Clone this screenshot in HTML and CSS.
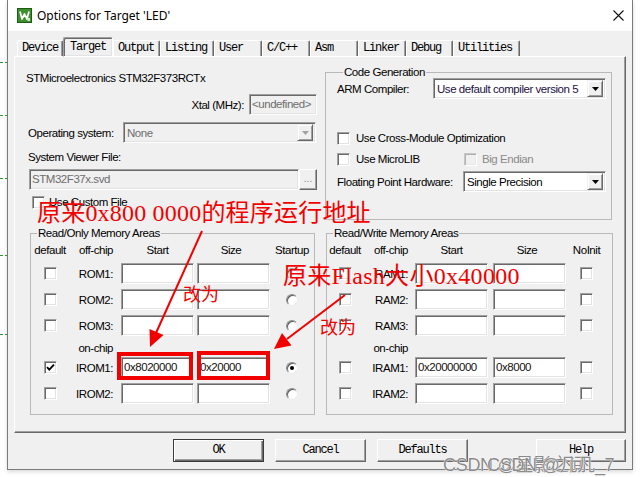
FILE: index.html
```html
<!DOCTYPE html>
<html>
<head>
<meta charset="utf-8">
<title>Options for Target 'LED'</title>
<link rel="stylesheet" href="styles.css">
</head>
<body>
<div class="strip"></div>
<div class="window">
  <div class="titlebar">
    <svg class="appicon" width="15" height="15" viewBox="0 0 15 15">
      <rect x="0.5" y="0.5" width="14" height="14" fill="#3d8f2e" stroke="#1e5a17"/>
      <polyline points="3,3.5 5,11 7.5,6 10,11 12,3.5" fill="none" stroke="#fff" stroke-width="1.7" stroke-linejoin="round"/>
      <rect x="10.5" y="10" width="2.5" height="3" fill="#cfe8c6"/>
    </svg>
    <span class="title">Options for Target 'LED'</span>
    <svg class="close" width="11" height="11" viewBox="0 0 11 11">
      <path d="M0.5 0.5 L10.5 10.5 M10.5 0.5 L0.5 10.5" stroke="#111" stroke-width="1.1" fill="none"/>
    </svg>
  </div>
  <div class="client">
    <div class="tabs">
      <div class="tab">Device</div>
      <div class="tab sel">Target</div>
      <div class="tab">Output</div>
      <div class="tab">Listing</div>
      <div class="tab">User</div>
      <div class="tab">C/C++</div>
      <div class="tab">Asm</div>
      <div class="tab">Linker</div>
      <div class="tab">Debug</div>
      <div class="tab">Utilities</div>
    </div>
    <div class="panel">
      <div class="col-left">
        <div class="dev">STMicroelectronics STM32F373RCTx</div>
        <div class="xtal"><span>Xtal (MHz):</span><div class="edit dis w67">&lt;undefined&gt;</div></div>
        <div class="os"><span>Operating system:</span>
          <div class="sel dis w193"><span class="val">None</span><span class="drop"><svg width="7" height="4" viewBox="0 0 7 4"><path d="M0 0h7L3.5 4z" fill="#a0a0a0"/></svg></span></div>
        </div>
        <div class="svf-label">System Viewer File:</div>
        <div class="svf"><div class="edit dis w270">STM32F37x.svd</div><div class="dots">...</div></div>
        <div class="custom"><span class="cb"></span><span>Use Custom File</span></div>
        <fieldset class="grp rom">
          <legend>Read/Only Memory Areas</legend>
          <div class="mgrid romg">
            <div class="hd ce">default</div><div class="hd lab">off-chip</div><div class="hd hs">Start</div><div class="hd hz">Size</div><div class="hd ce">Startup</div>
            <div class="ce"><span class="cb"></span></div><div class="lab">ROM1:</div><div><div class="edit w73"></div></div><div><div class="edit w73"></div></div><div class="ce"><span class="rb"></span></div>
            <div class="ce"><span class="cb"></span></div><div class="lab">ROM2:</div><div><div class="edit w73"></div></div><div><div class="edit w73"></div></div><div class="ce"><span class="rb"></span></div>
            <div class="ce"><span class="cb"></span></div><div class="lab">ROM3:</div><div><div class="edit w73"></div></div><div><div class="edit w73"></div></div><div class="ce"><span class="rb"></span></div>
            <div></div><div class="lab onchip">on-chip</div><div></div><div></div><div></div>
            <div class="ce"><span class="cb on"><svg width="9" height="9" viewBox="0 0 9 9"><path d="M1 4.2 L3.3 6.6 L8 1.6" fill="none" stroke="#000" stroke-width="1.8"/></svg></span></div><div class="lab">IROM1:</div><div><div class="edit w73">0x8020000</div></div><div><div class="edit w73">0x20000</div></div><div class="ce"><span class="rb on"></span></div>
            <div class="ce"><span class="cb"></span></div><div class="lab">IROM2:</div><div><div class="edit w73"></div></div><div><div class="edit w73"></div></div><div class="ce"><span class="rb"></span></div>
          </div>
        </fieldset>
      </div>
      <div class="col-right">
        <fieldset class="grp cg">
          <legend>Code Generation</legend>
          <div class="cg-row cg-comp"><span>ARM Compiler:</span>
            <div class="sel w173"><span class="val dark">Use default compiler version 5</span><span class="drop"><svg width="7" height="4" viewBox="0 0 7 4"><path d="M0 0h7L3.5 4z" fill="#000"/></svg></span></div>
          </div>
          <div class="cg-row cg-cmo"><span class="cb"></span><span class="cbl">Use Cross-Module Optimization</span></div>
          <div class="cg-row cg-ml">
            <span class="pair p1"><span class="cb"></span><span class="cbl">Use MicroLIB</span></span>
            <span class="pair dis"><span class="cb dis"></span><span class="cbl2">Big Endian</span></span>
          </div>
          <div class="cg-row cg-fph"><span>Floating Point Hardware:</span>
            <div class="sel w143"><span class="val">Single Precision</span><span class="drop"><svg width="7" height="4" viewBox="0 0 7 4"><path d="M0 0h7L3.5 4z" fill="#000"/></svg></span></div>
          </div>
        </fieldset>
        <fieldset class="grp rw">
          <legend>Read/Write Memory Areas</legend>
          <div class="mgrid rwg">
            <div class="hd ce">default</div><div class="hd lab">off-chip</div><div class="hd hs">Start</div><div class="hd hz">Size</div><div class="hd ce">NoInit</div>
            <div class="ce"><span class="cb"></span></div><div class="lab">RAM1:</div><div><div class="edit w73"></div></div><div><div class="edit w73"></div></div><div class="ce"><span class="cb"></span></div>
            <div class="ce"><span class="cb"></span></div><div class="lab">RAM2:</div><div><div class="edit w73"></div></div><div><div class="edit w73"></div></div><div class="ce"><span class="cb"></span></div>
            <div class="ce"><span class="cb"></span></div><div class="lab">RAM3:</div><div><div class="edit w73"></div></div><div><div class="edit w73"></div></div><div class="ce"><span class="cb"></span></div>
            <div></div><div class="lab onchip">on-chip</div><div></div><div></div><div></div>
            <div class="ce"><span class="cb"></span></div><div class="lab">IRAM1:</div><div><div class="edit w73">0x20000000</div></div><div><div class="edit w73">0x8000</div></div><div class="ce"><span class="cb"></span></div>
            <div class="ce"><span class="cb"></span></div><div class="lab">IRAM2:</div><div><div class="edit w73"></div></div><div><div class="edit w73"></div></div><div class="ce"><span class="cb"></span></div>
          </div>
        </fieldset>
      </div>
    </div>
    <div class="buttons">
      <div class="btn def">OK</div>
      <div class="btn">Cancel</div>
      <div class="btn">Defaults</div>
      <div class="btn help">Help</div>
    </div>
  </div>
</div>

<svg class="marks" width="640" height="477" viewBox="0 0 640 477">
  <g fill="none" stroke="#f20000" stroke-width="4">
    <rect x="119" y="354" width="72" height="24"/>
    <rect x="199" y="353" width="69" height="25"/>
  </g>
  <g stroke="#f20000" stroke-width="2" fill="#f20000">
    <line x1="202" y1="231" x2="156" y2="333"/>
    <polygon points="150,347 163.5,335 149.5,329" stroke="none"/>
    <line x1="345" y1="295" x2="287" y2="339"/>
    <polygon points="274,349 291.5,345.5 282,333" stroke="none"/>
  </g>
</svg>
<div class="note n1">原来0x800 0000的程序运行地址</div>
<div class="note n2">原来Flash大小0x40000</div>
<div class="note n3">改为</div>
<div class="note n4">改为</div>
<div class="wm"><span class="wa">CSDN @星影之间</span><span class="wb">CSDN @凡凡_7</span></div>
</body>
</html>
```

FILE: styles.css
```css
* { box-sizing: border-box; }
html, body { margin: 0; padding: 0; }
body {
  width: 640px;
  height: 477px;
  overflow: hidden;
  position: relative;
  background: #fff;
  display: flex;
  align-items: flex-start;
  font-family: "Liberation Sans", Arial, sans-serif;
  font-size: 11.5px;
  letter-spacing: -0.45px;
  color: #000;
}

/* background strip on the left with green dashed lines */
.strip {
  width: 7px;
  height: 477px;
  flex: none;
  background-image:
    repeating-linear-gradient(90deg, #2f9a2f 0 3px, transparent 3px 5px),
    repeating-linear-gradient(90deg, #2f9a2f 0 3px, transparent 3px 5px),
    repeating-linear-gradient(90deg, #2f9a2f 0 3px, transparent 3px 5px),
    repeating-linear-gradient(90deg, #2f9a2f 0 3px, transparent 3px 5px),
    repeating-linear-gradient(90deg, #2f9a2f 0 3px, transparent 3px 5px);
  background-size: 7px 1px;
  background-repeat: no-repeat;
  background-position: 0 62px, 0 115px, 0 178px, 0 255px, 0 334px;
}

.window {
  width: 626px;
  height: 470px;
  flex: none;
  border: 1px solid #7a7a7a;
  border-top: 0;
  background: #f0f0f0;
  display: flex;
  flex-direction: column;
  box-shadow: 0 2px 4px rgba(0,0,0,0.14);
}

.titlebar {
  height: 31px;
  flex: none;
  background: #fff;
  display: flex;
  align-items: center;
  padding-left: 9px;
}
.appicon { flex: none; margin-right: 5px; }
.title {
  font-family: "Noto Sans", "Open Sans", sans-serif;
  font-size: 12px;
  letter-spacing: 0;
  color: #000;
}
.close { margin-left: auto; margin-right: 8px; }

.client {
  flex: 1;
  padding: 6px 6px 0 6px;
  display: flex;
  flex-direction: column;
}

/* tabs */
.tabs {
  display: grid;
  grid-template-columns: 46px 50px 47px 54px 48px 48px 48px 48px 47px 67px;
  height: 19px;
  margin-left: 3px;
  flex: none;
  position: relative;
  z-index: 1;
}
.tab {
  margin-top: 3px;
  height: 16px;
  border-left: 1px solid #fff;
  border-top: 1px solid #fff;
  border-right: 1px solid #696969;
  border-radius: 2px 2px 0 0;
  box-shadow: inset -1px 0 0 #a0a0a0;
  padding-left: 4px;
  font-family: "Liberation Mono", "Courier New", monospace;
  font-size: 12px;
  letter-spacing: -1.2px;
  line-height: 15px;
  white-space: nowrap;
}
.tab.sel {
  margin-top: 0;
  height: 20px;
  padding-left: 6px;
  line-height: 17px;
  background: #f0f0f0;
  position: relative;
  z-index: 2;
}

/* tab panel */
.panel {
  height: 377px;
  flex: none;
  border: 1px solid;
  border-color: #fff #696969 #696969 #fff;
  box-shadow: inset -1px -1px 0 #a0a0a0;
  display: grid;
  grid-template-columns: 305px 1fr;
  align-items: start;
}

.col-left { display: flex; flex-direction: column; }
.col-right { display: flex; flex-direction: column; }

.dev { margin: 11px 0 0 11px; line-height: 20px; height: 20px; }
.xtal {
  margin-top: 6px;
  display: flex;
  justify-content: flex-end;
  align-items: center;
  gap: 5px;
  padding-right: 3px;
}
.os {
  margin-top: 7px;
  display: flex;
  align-items: center;
  padding-left: 13px;
  padding-right: 4px;
}
.os .sel { margin-left: auto; }
.svf-label { margin-top: 6px; line-height: 16px; padding-left: 13px; }
.svf { margin-top: 4px; display: flex; padding-left: 14px; }
.dots {
  width: 18px;
  height: 21px;
  border: 1px solid;
  border-color: #fff #696969 #696969 #fff;
  box-shadow: inset -1px -1px 0 #a0a0a0;
  color: #8a8a8a;
  text-align: center;
  line-height: 17px;
  font-size: 10px;
  letter-spacing: 0;
}
.custom {
  margin-top: 6px;
  height: 13px;
  display: flex;
  align-items: center;
  gap: 4px;
  padding-left: 17px;
  line-height: 13px;
}

/* controls */
.edit {
  height: 21px;
  background: #fff;
  border: 1px solid;
  border-color: #a0a0a0 #fff #fff #a0a0a0;
  box-shadow: inset 1px 1px 0 #696969, inset -1px -1px 0 #e3e3e3;
  padding-left: 2px;
  line-height: 19px;
  white-space: nowrap;
  overflow: hidden;
  color: #111;
}
.edit.dis { background: #f0f0f0; color: #6d6d6d; }
.w67 { width: 68px; }
.w73 { width: 73px; }
.w270 { width: 270px; }
.w193 { width: 193px; }
.w173 { width: 173px; }
.w143 { width: 143px; }

.sel {
  height: 21px;
  display: flex;
  align-items: center;
  background: #fff;
  border: 1px solid;
  border-color: #a0a0a0 #fff #fff #a0a0a0;
  box-shadow: inset 1px 1px 0 #696969, inset -1px -1px 0 #e3e3e3;
  padding: 0 2px 0 3px;
  white-space: nowrap;
}
.sel .val { flex: 1; overflow: hidden; }
.sel .val.dark { color: #1c1044; }
.sel.dis { background: #f0f0f0; color: #6d6d6d; }
.drop {
  width: 16px;
  height: 17px;
  flex: none;
  background: #f0f0f0;
  border: 1px solid;
  border-color: #f0f0f0 #696969 #696969 #f0f0f0;
  box-shadow: inset 1px 1px 0 #fff, inset -1px -1px 0 #a0a0a0;
  display: flex;
  align-items: center;
  justify-content: center;
}

.cb {
  width: 13px;
  height: 13px;
  flex: none;
  display: inline-flex;
  align-items: center;
  justify-content: center;
  background: #fff;
  border: 1px solid;
  border-color: #a0a0a0 #fff #fff #a0a0a0;
  box-shadow: inset 1px 1px 0 #696969, inset -1px -1px 0 #e3e3e3;
}
.cb.dis {
  background: #f0f0f0;
  border-color: #c8c8c8 #fff #fff #c8c8c8;
  box-shadow: inset 1px 1px 0 #b0b0b0, inset -1px -1px 0 #e8e8e8;
}
.rb {
  width: 12px;
  height: 12px;
  display: inline-block;
  position: relative;
  border-radius: 50%;
  background: #fff;
  border: 1px solid;
  border-color: #8c8c8c #ececec #ececec #8c8c8c;
  box-shadow: inset 1px 1px 0 #5a5a5a;
}
.rb.on::after {
  content: "";
  position: absolute;
  left: 3px;
  top: 3px;
  width: 4px;
  height: 4px;
  border-radius: 50%;
  background: #000;
}

/* group boxes */
.grp {
  margin: 0;
  padding: 0;
  min-width: 0;
  border: 1px solid #b9b9b9;
}
.grp legend {
  padding: 0 1px;
  margin-left: 6px;
  line-height: 14px;
}
.rom { margin: 17px 0 0 15px; width: 285px; padding: 2px 0 10px 0; }
.cg { margin: 8px 0 0 5px; width: 287px; padding: 0 5px 27px 11px; }
.rw { margin: 6px 0 0 6px; width: 287px; padding: 2px 0 10px 0; }

.mgrid {
  display: grid;
  grid-template-rows: 16px 21px 21px 21px 11px 21px 21px;
  row-gap: 5px;
  align-items: center;
}
.romg { grid-template-columns: 38px 52px 76px 73px 44px; }
.rwg { grid-template-columns: 36px 52px 78px 73px 41px; }
.romg .lab { padding-right: 8px; }
.rwg .lab { padding-right: 7px; }
.hd { line-height: 16px; white-space: nowrap; }
.ce { display: flex; justify-content: center; align-items: center; }
.lab { text-align: right; white-space: nowrap; }
.hs { width: 73px; text-align: center; }
.hz { width: 73px; text-align: center; padding-right: 5px; }
.onchip { align-self: end; line-height: 14px; margin-bottom: -3px; }

.cg-row { display: flex; align-items: center; }
.cg-comp { margin-top: -1px; height: 21px; }
.cg-comp .sel, .cg-fph .sel { margin-left: auto; }
.cg-cmo { margin-top: 29px; height: 20px; }
.cg-ml { margin-top: 1px; height: 20px; }
.cg-fph { margin-top: 2px; height: 21px; }
.cbl { margin-left: 6px; }
.cbl2 { margin-left: 5px; }
.pair { display: flex; align-items: center; }
.p1 { width: 127px; }
.pair.dis { color: #8a8a8a; }

/* buttons */
.buttons {
  margin-top: 6px;
  display: flex;
  gap: 11px;
  padding-left: 159px;
}
.btn {
  width: 91px;
  height: 23px;
  border: 1px solid;
  border-color: #fff #696969 #696969 #fff;
  box-shadow: inset -1px -1px 0 #a0a0a0;
  text-align: center;
  line-height: 20px;
  font-family: "Liberation Mono", "Courier New", monospace;
  font-size: 12px;
  letter-spacing: -1.2px;
}
.btn.def {
  border: 1px solid #3c3c3c;
  box-shadow: inset 1px 1px 0 #fff, inset -1px -1px 0 #696969, inset -2px -2px 0 #a0a0a0;
}
.btn.help { margin-left: auto; width: 90px; }

/* annotations drawn on top of the screenshot */
.marks { position: absolute; left: 0; top: 0; pointer-events: none; }
.note {
  position: absolute;
  color: #f20000;
  font-family: "Liberation Serif", "Noto Sans CJK SC", serif;
  white-space: nowrap;
  letter-spacing: 0;
}
.n1 { left: 37px; top: 199px; font-size: 24px; line-height: 28px; letter-spacing: 0.2px; }
.n2 { left: 283px; top: 262px; font-size: 24px; line-height: 28px; letter-spacing: 0.3px; }
.n3 { left: 183px; top: 285px; font-size: 18px; line-height: 20px; }
.n4 { left: 320px; top: 318px; font-size: 18px; line-height: 20px; }

.wm {
  position: absolute;
  left: 443px;
  top: 450px;
  width: 190px;
  height: 22px;
  font-family: "Liberation Sans", "Noto Sans CJK SC", sans-serif;
  font-size: 18px;
  letter-spacing: -0.3px;
  color: rgba(105,105,105,0.78);
  white-space: nowrap;
  text-shadow: 0 0 1px #fff, 0 0 1px #fff;
}
.wa, .wb { position: absolute; top: 0; }
.wa { left: 0; }
.wb { left: 44px; }
```
